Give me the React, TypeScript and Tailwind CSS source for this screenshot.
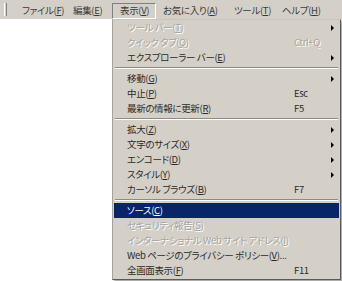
import React from "react";

type Item =
  | { sep: true }
  | {
      sep?: false;
      label: string;
      k: string;
      suffix?: string;
      shortcut?: string;
      sub?: boolean;
      disabled?: boolean;
      active?: boolean;
    };

const bar = [
  { label: "ファイル", k: "F", w: "w-[51px]" },
  { label: "編集", k: "E", w: "w-[46px]" },
  { label: "表示", k: "V", w: "w-[44px]", pressed: true },
  { label: "お気に入り", k: "A", w: "w-[71px]" },
  { label: "ツール", k: "T", w: "w-[48px]" },
  { label: "ヘルプ", k: "H", w: "w-[50px]" },
];

const items: Item[] = [
  { label: "ツール バー", k: "T", sub: true, disabled: true },
  { label: "クイック タブ", k: "Q", shortcut: "Ctrl+Q", disabled: true },
  { label: "エクスプローラー バー", k: "E", sub: true },
  { sep: true },
  { label: "移動", k: "G", sub: true },
  { label: "中止", k: "P", shortcut: "Esc" },
  { label: "最新の情報に更新", k: "R", shortcut: "F5" },
  { sep: true },
  { label: "拡大", k: "Z", sub: true },
  { label: "文字のサイズ", k: "X", sub: true },
  { label: "エンコード", k: "D", sub: true },
  { label: "スタイル", k: "Y", sub: true },
  { label: "カーソル ブラウズ", k: "B", shortcut: "F7" },
  { sep: true },
  { label: "ソース", k: "C", active: true },
  { label: "セキュリティ報告", k: "S", disabled: true },
  { label: "インターナショナル Web サイト アドレス", k: "I", disabled: true },
  { label: "Web ページのプライバシー ポリシー", k: "V", suffix: "..." },
  { label: "全画面表示", k: "F", shortcut: "F11" },
];

const Label = ({ label, k, suffix }: { label: string; k: string; suffix?: string }) => (
  <span className="whitespace-nowrap">
    {label}(<span className="underline underline-offset-1 decoration-[0.5px]">{k}</span>){suffix}
  </span>
);

export default function App() {
  return (
    <div className="relative w-[342px] h-[281px] bg-white overflow-hidden text-[9.5px] tracking-[-0.35px] leading-none [font-family:'Noto_Sans_CJK_JP','Noto_Sans',sans-serif] [font-feature-settings:'palt']">
      {/* menu bar */}
      <div className="flex items-center h-[19px] bg-[#d4d0c8] text-[#3a3a3a]">
        <div className="ml-[4px] mr-[8px] w-[3px] h-[13px] shrink-0 border-l border-r border-l-white border-r-[#808080]" />
        {bar.map((b) => (
          <div
            key={b.label}
            className={`${b.w} shrink-0 h-[16px] mt-[3px] flex items-center pl-[7px] ${
              b.pressed ? "border border-t-[#808080] border-l-[#808080] border-b-white border-r-white pl-[6px]" : ""
            }`}
          >
            <Label label={b.label} k={b.k} />
          </div>
        ))}
      </div>

      {/* dropdown */}
      <div className="absolute left-[112px] top-[19px] w-[229px] bg-[#d4d0c8] border border-t-[#c8c5be] border-l-[#a5a29b] border-r-[#5a5a5a] border-b-[#5a5a5a] p-[1px] pt-0 shadow-[2px_2px_2px_rgba(0,0,0,0.35)]">
        {items.map((it, i) =>
          it.sep ? (
            <div key={i} className="h-[6px] flex flex-col justify-center px-[1px]">
              <div className="h-px bg-[#8e8b85]" />
              <div className="h-px bg-white" />
            </div>
          ) : (
            <div
              key={i}
              className={`flex items-center h-[15px] pl-[13px] ${
                it.active
                  ? "bg-[#0a246a] text-white"
                  : it.disabled
                  ? "text-[#a8a59e] [text-shadow:1px_1px_0_#ffffff]"
                  : "text-[#2b2b2b]"
              }`}
            >
              <div className="flex-1">
                <Label label={it.label} k={it.k} suffix={it.suffix} />
              </div>
              <div className="w-[36px] whitespace-nowrap">{it.shortcut}</div>
              <div className="w-[9px] pl-[1px] flex items-center">
                {it.sub && (
                  <div className="w-0 h-0 border-y-[3px] border-y-transparent border-l-[3px] border-l-black" />
                )}
              </div>
            </div>
          )
        )}
      </div>
    </div>
  );
}
